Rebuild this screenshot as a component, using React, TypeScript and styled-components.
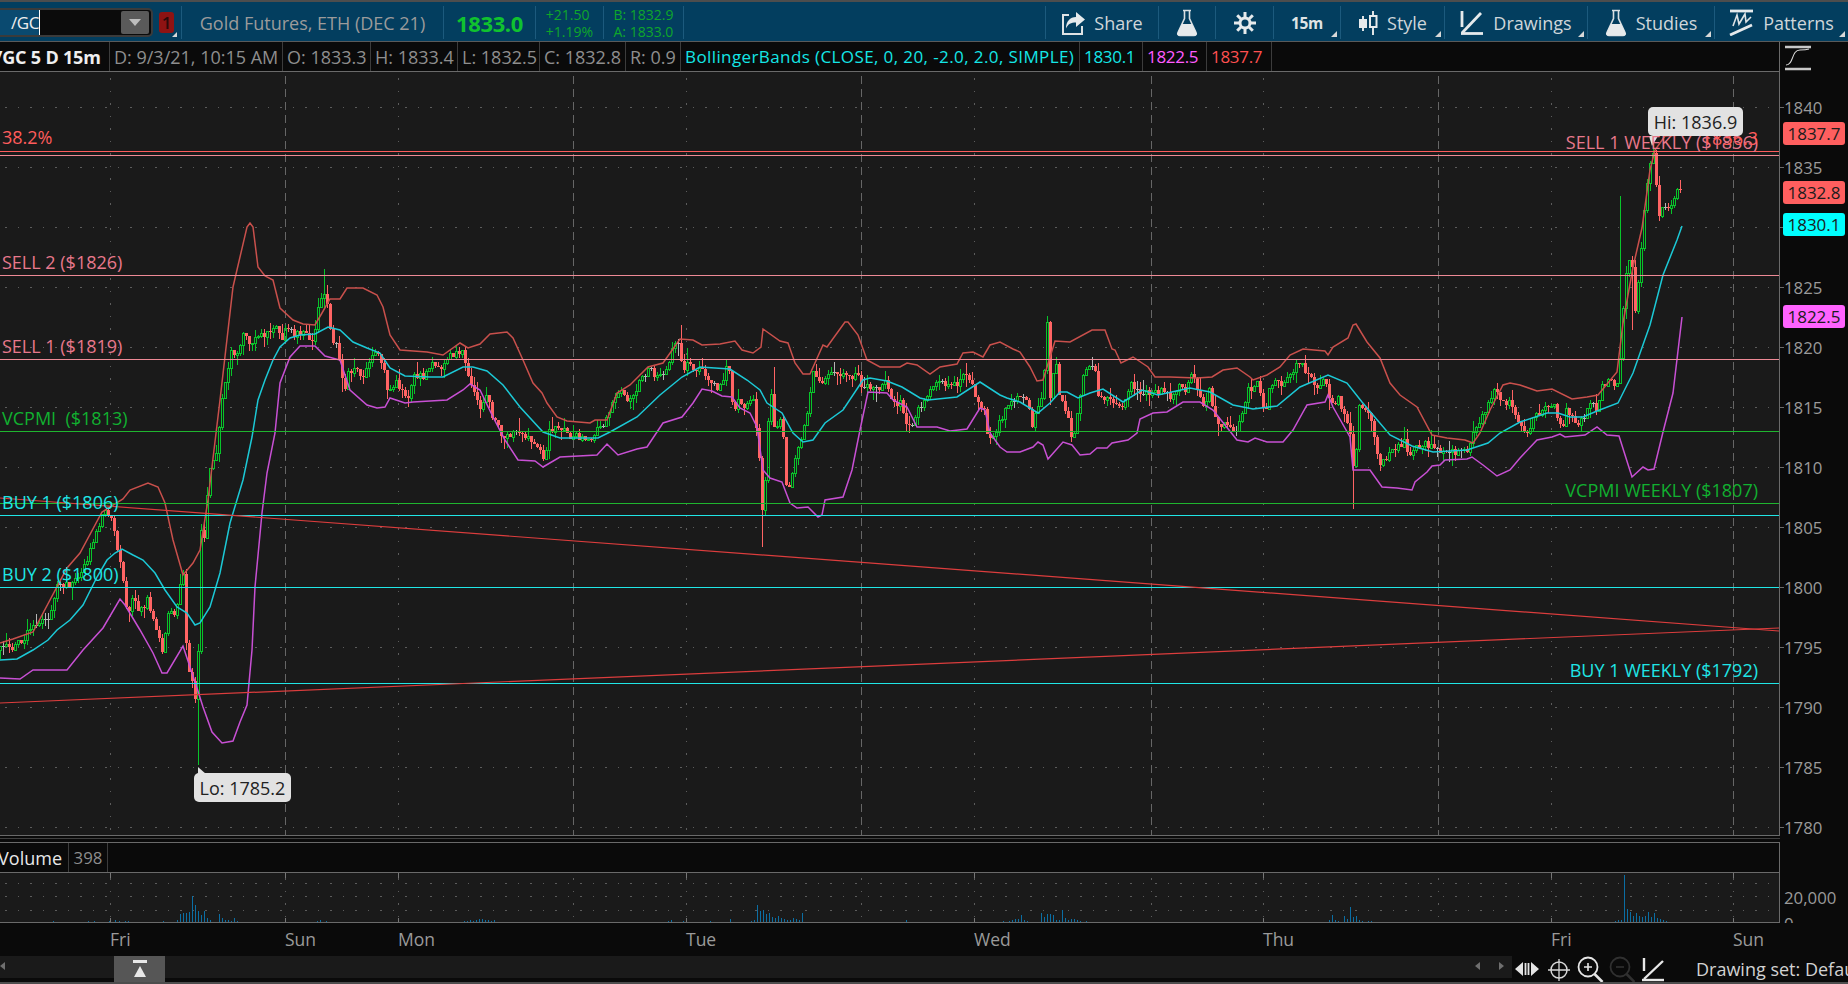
import React from "react";
import styled, { createGlobalStyle } from "styled-components";

const Global = createGlobalStyle`
  html, body { margin: 0; padding: 0; background: #0a0a0a; overflow: hidden; }
  #root { width: 1848px; height: 984px; }
  * { box-sizing: border-box; }
`;

/* ---------- chart data (page coordinates) ---------- */
type P = [number, number];
const upper: P[] = [[0,643],[13,639],[33,632],[67,568],[80,553],[102,512],[123,499],[130,490],[148,483],[158,487],[165,503],[173,540],[183,575],[193,563],[200,550],[208,500],[220,400],[233,287],[247,227],[250,223],[253,227],[258,267],[265,276],[273,280],[280,308],[293,320],[303,324],[315,325],[322,313],[330,299],[340,299],[347,288],[363,288],[377,295],[383,307],[390,335],[400,350],[427,352],[443,355],[460,343],[468,348],[480,344],[490,334],[507,332],[513,338],[523,360],[533,383],[542,393],[547,403],[557,417],[567,421],[590,423],[595,420],[607,420],[617,393],[630,385],[648,367],[663,363],[680,339],[693,340],[702,345],[720,344],[735,341],[742,350],[753,353],[761,347],[763,329],[780,341],[788,343],[795,363],[803,374],[810,374],[823,345],[827,347],[845,322],[848,322],[858,335],[867,360],[880,367],[900,367],[907,363],[917,365],[930,374],[940,367],[957,364],[963,353],[973,352],[983,357],[990,345],[1000,342],[1013,349],[1020,352],[1030,367],[1037,381],[1043,380],[1055,341],[1070,342],[1092,330],[1105,330],[1112,349],[1115,350],[1121,363],[1133,357],[1148,367],[1155,377],[1170,377],[1197,378],[1212,377],[1223,370],[1237,368],[1250,377],[1253,380],[1267,375],[1280,367],[1290,355],[1303,349],[1325,351],[1328,355],[1333,347],[1348,338],[1353,325],[1356,324],[1367,342],[1380,358],[1390,383],[1400,395],[1417,407],[1432,435],[1447,438],[1465,440],[1473,443],[1480,433],[1490,410],[1503,385],[1510,383],[1520,385],[1537,391],[1552,389],[1572,399],[1587,397],[1598,395],[1617,372],[1623,323],[1633,267],[1642,228],[1650,170],[1655,150],[1665,136],[1682,135]];
const middle: P[] = [[0,660],[17,659],[33,650],[48,640],[57,630],[70,620],[83,605],[97,577],[107,560],[115,553],[122,549],[133,555],[143,560],[155,573],[165,590],[177,607],[187,613],[195,625],[200,623],[210,607],[220,573],[230,523],[243,480],[252,437],[258,400],[265,380],[273,360],[280,347],[290,338],[300,335],[315,334],[328,327],[340,330],[353,342],[367,348],[380,353],[390,368],[405,376],[430,377],[443,377],[463,367],[473,367],[487,371],[503,385],[520,407],[543,432],[560,438],[598,438],[610,432],[637,417],[660,395],[682,377],[700,367],[730,369],[747,380],[760,390],[767,403],[782,413],[793,433],[803,442],[813,440],[825,423],[843,410],[863,380],[870,378],[887,381],[902,387],[920,398],[928,400],[957,397],[980,382],[1000,395],[1007,398],[1020,402],[1038,413],[1050,403],[1060,392],[1067,392],[1078,398],[1090,393],[1103,389],[1123,402],[1142,390],[1158,395],[1190,388],[1210,392],[1233,405],[1253,409],[1277,406],[1300,387],[1328,375],[1347,383],[1362,402],[1390,435],[1412,446],[1433,452],[1467,450],[1488,443],[1500,433],[1520,422],[1547,413],[1558,413],[1570,417],[1583,417],[1597,411],[1618,403],[1633,373],[1650,325],[1663,275],[1677,240],[1682,226]];
const lower: P[] = [[0,678],[20,679],[33,670],[57,670],[67,670],[83,650],[103,628],[120,599],[125,605],[140,630],[153,653],[162,673],[167,673],[183,646],[190,667],[197,688],[203,707],[212,732],[222,743],[233,741],[240,722],[247,705],[252,650],[255,587],[262,513],[267,473],[275,433],[280,383],[290,357],[300,346],[315,346],[325,356],[340,360],[350,390],[367,405],[377,408],[385,407],[390,398],[405,403],[413,402],[447,400],[463,390],[470,384],[480,390],[493,417],[505,440],[518,460],[535,461],[543,467],[560,457],[597,455],[607,444],[618,455],[637,449],[647,447],[663,423],[682,417],[693,403],[702,389],[712,391],[722,396],[732,397],[740,408],[750,413],[757,427],[763,470],[770,478],[782,482],[790,503],[797,508],[808,507],[818,517],[822,515],[825,500],[843,497],[852,470],[860,430],[868,392],[887,393],[893,400],[907,407],[917,427],[937,427],[950,431],[967,429],[980,408],[985,410],[990,433],[1000,447],[1007,452],[1020,452],[1033,447],[1038,442],[1043,445],[1048,459],[1063,442],[1072,445],[1080,455],[1090,454],[1097,448],[1107,448],[1112,443],[1128,440],[1137,433],[1140,419],[1153,413],[1167,412],[1183,402],[1200,402],[1213,410],[1237,440],[1248,442],[1255,438],[1267,442],[1283,442],[1293,430],[1307,405],[1325,402],[1328,395],[1333,407],[1350,437],[1353,470],[1370,470],[1382,487],[1397,488],[1412,490],[1415,482],[1427,472],[1432,466],[1440,465],[1445,460],[1467,459],[1472,457],[1483,465],[1497,476],[1510,470],[1520,458],[1537,440],[1552,437],[1560,434],[1565,437],[1585,435],[1597,427],[1607,435],[1619,436],[1632,477],[1643,467],[1648,470],[1654,469],[1663,432],[1673,393],[1682,317]];
const closes: P[] = [[0,650],[15,645],[33,627],[47,620],[57,587],[73,583],[87,560],[97,530],[103,510],[110,517],[115,537],[123,580],[127,613],[133,597],[140,612],[147,600],[153,620],[162,650],[170,602],[173,620],[180,587],[183,577],[187,665],[192,680],[195,703],[198,653],[200,528],[205,537],[208,473],[217,450],[222,400],[230,353],[238,350],[245,328],[248,347],[257,337],[267,333],[273,327],[283,337],[287,323],[293,333],[307,335],[312,343],[320,300],[323,287],[328,310],[332,340],[337,340],[342,380],[347,390],[348,373],[357,370],[363,377],[370,357],[377,350],[385,373],[388,395],[395,380],[403,390],[408,400],[412,377],[422,377],[433,362],[440,373],[447,355],[457,353],[462,350],[467,373],[473,390],[482,410],[487,387],[492,420],[495,422],[505,440],[513,433],[523,433],[537,443],[545,462],[548,430],[560,428],[570,437],[580,437],[592,438],[597,430],[605,420],[610,407],[615,395],[623,393],[628,403],[635,395],[640,380],[650,368],[653,380],[662,377],[667,363],[677,340],[682,365],[685,377],[688,360],[693,370],[702,367],[707,377],[717,388],[725,373],[728,358],[733,413],[738,397],[745,407],[753,398],[758,447],[763,523],[767,437],[770,387],[775,433],[782,417],[785,478],[788,488],[793,468],[800,443],[808,410],[813,367],[820,382],[828,377],[838,373],[850,377],[857,372],[860,390],[868,385],[877,388],[885,382],[892,400],[900,403],[907,430],[913,420],[920,407],[932,385],[942,383],[950,388],[957,383],[962,373],[970,377],[977,403],[985,407],[988,445],[997,427],[1003,413],[1010,403],[1020,397],[1027,397],[1032,423],[1040,403],[1043,383],[1047,323],[1050,402],[1055,357],[1060,400],[1067,415],[1073,443],[1078,403],[1083,377],[1090,363],[1095,373],[1098,398],[1107,397],[1120,410],[1125,400],[1130,380],[1137,390],[1147,392],[1160,390],[1173,397],[1178,382],[1185,388],[1192,373],[1197,393],[1203,403],[1210,388],[1213,412],[1220,425],[1227,423],[1237,433],[1240,418],[1248,390],[1257,385],[1265,413],[1270,383],[1283,383],[1293,370],[1300,358],[1305,370],[1317,388],[1325,375],[1330,407],[1337,397],[1343,413],[1352,440],[1354,495],[1358,405],[1367,410],[1373,433],[1380,467],[1390,452],[1397,447],[1405,440],[1408,458],[1415,447],[1422,443],[1430,445],[1447,452],[1467,452],[1470,440],[1480,422],[1490,398],[1495,391],[1500,403],[1508,402],[1515,415],[1518,425],[1527,437],[1533,418],[1542,410],[1553,403],[1562,428],[1565,410],[1573,420],[1578,425],[1583,417],[1588,403],[1597,408],[1602,383],[1610,383],[1618,387],[1622,325],[1627,260],[1633,267],[1635,315],[1640,258],[1645,193],[1652,150],[1655,172],[1658,217],[1663,203],[1670,207],[1675,195],[1678,187],[1682,193]];

const longWicks: P[] = [[198,765],[1047,316],[763,547],[682,325],[323,269],[775,367],[1352,509],[1652,144],[1621,196],[1633,330],[231,376]];

const poly = (pts: P[]) => pts.map(([x, y]) => `${x},${y}`).join(" ");

const buildCandles = () => {
  let seed = 12345;
  const rnd = () => {
    seed = (seed * 1664525 + 1013904223) % 4294967296;
    return seed / 4294967296;
  };
  const at = (x: number) => {
    for (let k = 1; k < closes.length; k++) {
      if (x <= closes[k][0]) {
        const [x0, y0] = closes[k - 1];
        const [x1, y1] = closes[k];
        return y0 + ((y1 - y0) * (x - x0)) / (x1 - x0 || 1);
      }
    }
    return closes[closes.length - 1][1];
  };
  let green = "";
  let redBody = "";
  let redWick = "";
  let gray = "";
  let prev = at(0);
  for (let i = 0; i <= 560; i++) {
    const x = i * 3;
    const c = Math.round(at(x) + (rnd() - 0.5) * 8);
    const o = Math.round(prev);
    const top = Math.min(o, c);
    const bot = Math.max(o, c);
    let hi = top - Math.round(rnd() * rnd() * 15);
    let lo = bot + Math.round(rnd() * rnd() * 15);
    for (const [wx, wy] of longWicks) {
      if (Math.abs(wx - x) <= 1) {
        if (wy < top) hi = wy;
        else if (wy > bot) lo = wy;
      }
    }
    const h = bot - top;
    if (h < 1) {
      gray += `M${x + 0.5} ${hi - 1}V${lo + 2}M${x - 1} ${top + 0.5}h3`;
    } else if (c < o) {
      green += `M${x + 0.5} ${hi}V${top}M${x + 0.5} ${bot}V${lo}M${x - 0.5} ${top + 0.5}h2v${h}h-2z`;
    } else {
      redBody += `M${x - 1} ${top}h3v${h}h-3z`;
      redWick += `M${x + 0.5} ${hi}V${lo}`;
    }
    prev = c;
  }
  return { green, redBody, redWick, gray };
};
const candles = buildCandles();

const gridPrices = Array.from({ length: 13 }, (_, i) => 1840 - i * 5);
const yOf = (p: number) => 107 + (1840 - p) * 12;

const levels: { y: number; color: string }[] = [
  { y: 151, color: "#ff5c5c" },
  { y: 155, color: "#f08a94" },
  { y: 275, color: "#ee8a96" },
  { y: 359, color: "#ee8a96" },
  { y: 431, color: "#1fb52f" },
  { y: 503, color: "#1fb52f" },
  { y: 515, color: "#20e6e6" },
  { y: 587, color: "#20e6e6" },
  { y: 683, color: "#20e6e6" },
];
const dottedX = [110, 398, 686, 974, 1263, 1551];
const dashedX = [285, 573, 861, 1151, 1438, 1733];

const clusters: [number, number[]][] = [
  [38, [1]], [53, [2, 0, 1]], [88, [2, 0, 2]], [103, [1, 1, 2, 1, 3]], [116, [1, 2, 1, 2]], [128, [2, 1, 1]],
  [160, [1, 2, 1, 1, 1, 1]], [177, [3, 9, 10, 10, 11, 27, 18, 12, 8, 12, 5, 3]], [219, [9, 5, 3, 3, 2, 5, 2, 1, 1]], [270, [1]],
  [314, [1, 2, 3, 1, 2]], [338, [1, 1]], [378, [1]], [387, [1, 1]], [406, [1, 1]], [436, [1]],
  [461, [1, 2, 2, 3, 2, 3, 4, 4, 3, 3, 2, 3, 1, 1]], [526, [1]], [543, [1]], [610, [1]], [668, [2, 3, 1, 1, 1, 2]],
  [704, [1, 1, 2, 1]], [727, [1, 4]], [748, [1, 2, 3, 18, 12, 13, 9, 10, 6, 5, 7, 5, 4, 3, 3, 5, 4, 3, 10]],
  [900, [1]], [906, [3]], [910, [1]], [965, [1, 1]], [1000, [1, 2, 1, 2, 1, 1, 4, 8, 3, 2]], [1012, [3, 4]],
  [1041, [10, 6, 9, 9, 8, 3, 3, 13, 5, 3, 4, 4, 3, 2, 1, 2, 1, 1, 0, 1, 1]], [1280, [1]], [1287, [1]], [1293, [1]],
  [1329, [3, 8, 3, 2, 1, 7, 4, 16, 6, 7, 3, 2, 1, 2, 2, 1, 1, 1]], [1392, [1]], [1401, [1]], [1476, [1]], [1486, [1]],
  [1603, [1, 1, 1, 1, 2, 3, 3, 48, 14, 11, 7, 10, 7, 6, 7, 11, 6, 10, 5, 4, 3, 2, 1, 1]],
];
const volumePath = clusters
  .map(([x0, hs]) => hs.map((h, i) => (h ? `M${x0 + i * 3 + 0.5} 923v-${h}` : "")).join(""))
  .join("");

/* ---------- page ---------- */
const Page = styled.div`
  width: 1848px;
  height: 984px;
  display: flex;
  flex-direction: column;
  background: #0a0a0a;
  font-family: "Open Sans", "DejaVu Sans", sans-serif;
  overflow: hidden;
`;
const TopStrip = styled.div`
  height: 2px;
  background: #4d4d4d;
  flex: none;
`;
const Toolbar = styled.div`
  height: 40px;
  flex: none;
  display: flex;
  align-items: stretch;
  background: #033e5f;
  border-bottom: 1px solid #5a5a5a;
`;
const ToolSection = styled.div<{ $w: number; $sep?: boolean }>`
  position: relative;
  flex: none;
  width: ${(p) => p.$w}px;
  display: flex;
  align-items: center;
  justify-content: center;
  gap: 9px;
  margin: 4px 0 2px;
  border-left: ${(p) => (p.$sep === false ? "none" : "1px solid #1c5a7d")};
  color: #cfd6da;
  font-size: 18px;
`;
const Spacer = styled.div<{ $w: number }>`
  flex: none;
  width: ${(p) => p.$w}px;
`;
const Corner = styled.span`
  position: absolute;
  right: 3px;
  bottom: 2px;
  width: 0;
  height: 0;
  border-left: 6px solid transparent;
  border-bottom: 6px solid #d8d8d8;
`;
const SearchSection = styled.div`
  flex: none;
  width: 181px;
  display: flex;
  align-items: center;
  padding-top: 1px;
  position: relative;
`;
const SearchBox = styled.div`
  width: 153px;
  height: 29px;
  display: flex;
  align-items: stretch;
  padding: 0 2px 0 0;
  background: #0b0b0b;
  border: 2px solid #3b3b3b;
  border-left: none;
  border-radius: 0 5px 5px 0;
`;
const SearchText = styled.span`
  width: 40px;
  display: flex;
  align-items: center;
  justify-content: flex-end;
  background: #0a4a70;
  border-right: 1px solid #fff;
  color: #eee;
  font-size: 17px;
  letter-spacing: -0.4px;
  white-space: nowrap;
`;
const DropButton = styled.span`
  margin: 1px 0 1px auto;
  width: 28px;
  display: flex;
  align-items: center;
  justify-content: center;
  background: #5a5a5a;
  border-radius: 2px;
  &::after {
    content: "";
    border-left: 6px solid transparent;
    border-right: 6px solid transparent;
    border-top: 7px solid #bdbdbd;
  }
`;
const AlertBadge = styled.span`
  width: 15px;
  height: 21px;
  margin-left: 6px;
  display: flex;
  align-items: center;
  justify-content: center;
  background: #8e1313;
  border-radius: 3px;
  color: #2a0a0a;
  font-size: 17px;
  font-weight: 600;
`;
const CornerBadge = styled(Corner)`
  right: 4px;
  bottom: 4px;
  border-left-width: 5px;
  border-bottom-width: 5px;
`;
const TitleText = styled.span`
  color: #9b9b9b;
  font-size: 18px;
  white-space: nowrap;
`;
const LastPrice = styled.span`
  color: #10c22f;
  font-size: 22px;
  font-weight: 700;
  letter-spacing: -0.4px;
`;
const StackedText = styled.div`
  display: flex;
  flex-direction: column;
  color: #0fa62b;
  font-size: 14px;
  line-height: 17px;
  white-space: nowrap;
`;
const ButtonLabel = styled.span`
  white-space: nowrap;
`;
const IntervalLabel = styled.span`
  color: #dfe3e5;
  font-size: 15.5px;
  font-weight: 700;
  letter-spacing: -0.3px;
`;

const InfoRow = styled.div`
  height: 30px;
  flex: none;
  display: flex;
`;
const InfoBar = styled.div`
  flex: none;
  width: 1780px;
  display: flex;
  align-items: stretch;
  border-bottom: 1px solid #6a6a6a;
  border-right: 1px solid #6a6a6a;
  overflow: hidden;
`;
const InfoCell = styled.div<{ $w: number; $color?: string; $size?: number; $track?: number }>`
  flex: none;
  width: ${(p) => p.$w}px;
  display: flex;
  align-items: center;
  padding-left: 4px;
  border-right: 1px solid #3c3c3c;
  color: ${(p) => p.$color || "#8e8e8e"};
  font-size: ${(p) => p.$size ?? 18}px;
  letter-spacing: ${(p) => p.$track ?? 0}px;
  white-space: nowrap;
`;
const SymbolCell = styled(InfoCell)`
  padding-left: 0;
  color: #efefef;
  font-weight: 700;
  font-size: 18px;
  letter-spacing: -0.2px;
  overflow: hidden;
  & > span {
    margin-left: -5px;
  }
`;
const ScaleIconCell = styled.div`
  flex: 1;
  display: flex;
  padding: 3px 0 0 5px;
`;

const ChartRow = styled.div`
  height: 764px;
  flex: none;
  display: flex;
`;
const ChartPane = styled.div`
  position: relative;
  flex: none;
  width: 1780px;
  background: #1a1a1a;
  border-bottom: 1px solid #6a6a6a;
  border-right: 1px solid #6a6a6a;
  overflow: hidden;
`;
const ChartSvg = styled.svg`
  display: block;
  width: 1779px;
  height: 764px;
`;
const LevelLabel = styled.span<{ $x?: number; $r?: number; $y: number; $color: string }>`
  position: absolute;
  ${(p) => (p.$r !== undefined ? `right: ${p.$r}px;` : `left: ${p.$x}px;`)}
  top: ${(p) => p.$y - 72}px;
  transform: translateY(-50%);
  color: ${(p) => p.$color};
  font-size: 18px;
  white-space: pre;
`;
const Bubble = styled.div<{ $x: number; $y: number; $w: number }>`
  position: absolute;
  left: ${(p) => p.$x}px;
  top: ${(p) => p.$y - 72}px;
  width: ${(p) => p.$w}px;
  height: 29px;
  display: flex;
  align-items: center;
  justify-content: center;
  background: #e2e2e2;
  border-radius: 5px;
  color: #222;
  font-size: 18px;
  white-space: nowrap;
`;
const PriceScale = styled.div`
  position: relative;
  flex: 1;
  overflow: hidden;
`;
const PriceTick = styled.span<{ $y: number }>`
  position: absolute;
  left: 0;
  top: ${(p) => p.$y - 72}px;
  width: 4px;
  height: 1px;
  background: #6a6a6a;
`;
const PriceText = styled.span<{ $y: number }>`
  position: absolute;
  left: 4px;
  top: ${(p) => p.$y - 72}px;
  transform: translateY(-50%);
  color: #9a9a9a;
  font-size: 16.8px;
`;
const PriceTag = styled.span<{ $y: number; $bg: string }>`
  position: absolute;
  left: 3px;
  top: ${(p) => p.$y - 72}px;
  width: 62px;
  height: 23px;
  display: flex;
  align-items: center;
  justify-content: center;
  background: ${(p) => p.$bg};
  border-radius: 3px;
  color: #1c1c1c;
  font-size: 17px;
`;
const Splitter = styled.div`
  height: 7px;
  flex: none;
  width: 1780px;
  background: #0a0a0a;
  border-bottom: 1px solid #6a6a6a;
  padding-top: 2px;
  &::before {
    content: "";
    display: block;
    height: 1px;
    background: #3f3f3f;
  }
`;
const VolumeHeader = styled.div`
  height: 30px;
  flex: none;
  width: 1780px;
  display: flex;
  align-items: stretch;
  border-right: 1px solid #6a6a6a;
  border-bottom: 1px solid #6a6a6a;
`;
const VolumeTitle = styled.div`
  width: 69px;
  display: flex;
  align-items: center;
  justify-content: flex-end;
  padding-right: 6px;
  border-right: 1px solid #3c3c3c;
  color: #e8e8e8;
  font-size: 18px;
  overflow: hidden;
`;
const VolumeValue = styled.div`
  width: 39px;
  display: flex;
  align-items: center;
  justify-content: center;
  border-right: 1px solid #3c3c3c;
  color: #8e8e8e;
  font-size: 16.8px;
`;
const VolumeRow = styled.div`
  height: 50px;
  flex: none;
  display: flex;
`;
const VolumePane = styled.div`
  flex: none;
  width: 1780px;
  background: #1a1a1a;
  border-right: 1px solid #6a6a6a;
  border-bottom: 1px solid #6a6a6a;
`;
const VolumeSvg = styled.svg`
  display: block;
  width: 1779px;
  height: 49px;
`;
const VolumeScale = styled.div`
  flex: 1;
  position: relative;
  overflow: hidden;
  color: #9a9a9a;
  font-size: 16.8px;
`;
const VolumeScaleText = styled.span<{ $top: number }>`
  position: absolute;
  left: 4px;
  top: ${(p) => p.$top}px;
`;
const TimeAxis = styled.div`
  height: 33px;
  flex: none;
  position: relative;
`;
const TimeLabel = styled.span<{ $x: number }>`
  position: absolute;
  left: ${(p) => p.$x}px;
  top: 4px;
  color: #9a9a9a;
  font-size: 17.5px;
`;
const BottomBar = styled.div`
  height: 28px;
  flex: none;
  display: flex;
  align-items: flex-start;
  border-bottom: 2px solid #4d4d4d;
`;
const ScrollTrack = styled.div`
  position: relative;
  flex: none;
  width: 1512px;
  height: 22px;
  background: #1a1a1a;
`;
const ScrollThumb = styled.div`
  position: absolute;
  left: 114px;
  top: 0;
  width: 51px;
  height: 26px;
  display: flex;
  align-items: center;
  justify-content: center;
  background: #565656;
`;
const ArrowGlyph = styled.span<{ $dir: "l" | "r"; $x: number }>`
  position: absolute;
  left: ${(p) => p.$x}px;
  top: 6px;
  width: 0;
  height: 0;
  border-top: 4px solid transparent;
  border-bottom: 4px solid transparent;
  ${(p) => (p.$dir === "l" ? "border-right: 5px solid #6f6f6f;" : "border-left: 5px solid #6f6f6f;")}
`;
const BottomTools = styled.div`
  flex: 1;
  display: flex;
  align-items: center;
  height: 26px;
  padding-left: 3px;
  overflow: hidden;
  white-space: nowrap;
  color: #d2d2d2;
  font-size: 18px;
`;
const ToolIcon = styled.svg<{ $w: number; $m?: number }>`
  flex: none;
  width: ${(p) => p.$w}px;
  height: 26px;
  margin-right: ${(p) => p.$m ?? 9}px;
`;
const DrawingSet = styled.span`
  margin-left: 31px;
`;

/* ---------- icons ---------- */
const Flask = () => (
  <svg width="22" height="28" viewBox="0 0 22 28">
    <path d="M7 1.5h8M8.5 1.5v8L2 23.5c-.8 1.6.2 3 2 3h14c1.8 0 2.8-1.4 2-3L13.5 9.5v-8" fill="none" stroke="#d9dfe2" strokeWidth="1.6" />
    <path d="M6 15h10l4.6 9c.5 1.2-.3 2.5-1.8 2.5H3.2c-1.5 0-2.3-1.3-1.8-2.5z" fill="#e6eaec" />
  </svg>
);
const ShareIcon = () => (
  <svg width="24" height="26" viewBox="0 0 24 26">
    <path d="M8 5H2v19h19v-8" fill="none" stroke="#dfe3e5" strokeWidth="2" />
    <path d="M15 2l9 7.5-9 7.5v-4.5c-5 0-8 1.500-10 6 0-7 4-11.500 10-11.500z" fill="#e6eaec" />
  </svg>
);
const GearIcon = () => (
  <svg width="24" height="24" viewBox="0 0 24 24">
    <g stroke="#e6eaec" strokeWidth="3">
      <path d="M12 1v22M1 12h22M4.200 4.200l15.600 15.600M19.800 4.200L4.200 19.800" />
    </g>
    <circle cx="12" cy="12" r="6.500" fill="#e6eaec" />
    <circle cx="12" cy="12" r="3.500" fill="#033e5f" />
  </svg>
);
const StyleIcon = () => (
  <svg width="20" height="24" viewBox="0 0 20 24">
    <path d="M5 5v15M15 0v24" stroke="#dfe3e5" strokeWidth="2" />
    <rect x="1" y="8" width="8" height="9" fill="#e6eaec" />
    <rect x="12" y="5" width="6.500" height="11" fill="#033e5f" stroke="#e6eaec" strokeWidth="2" />
  </svg>
);
const DrawIcon = () => (
  <svg width="24" height="24" viewBox="0 0 24 24">
    <path d="M2 0v16" stroke="#e6eaec" strokeWidth="2.800" />
    <path d="M2 22L21 2" stroke="#e6eaec" strokeWidth="2.800" />
    <path d="M1 22.500h22" stroke="#e6eaec" strokeWidth="2.800" />
  </svg>
);
const PatternIcon = () => (
  <svg width="25" height="27" viewBox="0 0 25 27">
    <path d="M1 2h23" stroke="#e6eaec" strokeWidth="2.800" />
    <path d="M4 17L8 6l2 9 6-10 1 8 5-5" fill="none" stroke="#dfe3e5" strokeWidth="1.600" />
    <path d="M1 26L23 16" stroke="#e6eaec" strokeWidth="2.800" />
  </svg>
);

const leftLabels = [
  { x: 2, y: 137, c: "#ff5c5c", t: "38.2%" },
  { x: 2, y: 262, c: "#e8788c", t: "SELL 2 ($1826)" },
  { x: 2, y: 346, c: "#e8788c", t: "SELL 1 ($1819)" },
  { x: 2, y: 418, c: "#11b030", t: "VCPMI  ($1813)" },
  { x: 2, y: 502, c: "#1fe6e6", t: "BUY 1 ($1806)" },
  { x: 2, y: 574, c: "#1fe6e6", t: "BUY 2 ($1800)" },
];
const rightLabels = [
  { y: 142, c: "#e8788c", t: "SELL 1 WEEKLY ($1836)" },
  { y: 138, c: "#ff5c5c", t: "1836.3" },
  { y: 490, c: "#11b030", t: "VCPMI WEEKLY ($1807)" },
  { y: 670, c: "#1fe6e6", t: "BUY 1 WEEKLY ($1792)" },
];
const axis = [
  { x: 110, t: "Fri" },
  { x: 285, t: "Sun" },
  { x: 398, t: "Mon" },
  { x: 686, t: "Tue" },
  { x: 974, t: "Wed" },
  { x: 1263, t: "Thu" },
  { x: 1551, t: "Fri" },
  { x: 1733, t: "Sun" },
];
const infoCells = [
  { w: 173, t: "D: 9/3/21, 10:15 AM" },
  { w: 88, t: "O: 1833.3" },
  { w: 87, t: "H: 1833.4" },
  { w: 82, t: "L: 1832.5" },
  { w: 86, t: "C: 1832.8" },
  { w: 55, t: "R: 0.9" },
  { w: 399, t: "BollingerBands (CLOSE, 0, 20, -2.0, 2.0, SIMPLE)", c: "#14e6e6", s: 17, k: 0.4 },
  { w: 63, t: "1830.1", c: "#14e6e6", s: 17, k: -0.3 },
  { w: 64, t: "1822.5", c: "#ff5cff", s: 17, k: -0.3 },
  { w: 65, t: "1837.7", c: "#ff5050", s: 17, k: -0.3 },
];

export default function App() {
  return (
    <Page>
      <Global />
      <TopStrip />
      <Toolbar>
        <SearchSection>
          <SearchBox>
            <SearchText>/GC</SearchText>
            <DropButton />
          </SearchBox>
          <AlertBadge>1</AlertBadge>
          <CornerBadge />
        </SearchSection>
        <ToolSection $w={262}><TitleText>Gold Futures, ETH (DEC 21)</TitleText></ToolSection>
        <ToolSection $w={92}><LastPrice>1833.0</LastPrice></ToolSection>
        <ToolSection $w={68}><StackedText><span>+21.50</span><span>+1.19%</span></StackedText></ToolSection>
        <ToolSection $w={80}><StackedText><span>B: 1832.9</span><span>A: 1833.0</span></StackedText></ToolSection>
        <ToolSection $w={1} />
        <Spacer $w={361} />
        <ToolSection $w={113}><ShareIcon /><ButtonLabel>Share</ButtonLabel></ToolSection>
        <ToolSection $w={57}><Flask /></ToolSection>
        <ToolSection $w={58}><GearIcon /></ToolSection>
        <ToolSection $w={67}><IntervalLabel>15m</IntervalLabel><Corner /></ToolSection>
        <ToolSection $w={104}><StyleIcon /><ButtonLabel>Style</ButtonLabel><Corner /></ToolSection>
        <ToolSection $w={143}><DrawIcon /><ButtonLabel>Drawings</ButtonLabel><Corner /></ToolSection>
        <ToolSection $w={127}><Flask /><ButtonLabel>Studies</ButtonLabel><Corner /></ToolSection>
        <ToolSection $w={134}><PatternIcon /><ButtonLabel>Patterns</ButtonLabel><Corner /></ToolSection>
      </Toolbar>

      <InfoRow>
        <InfoBar>
          <SymbolCell $w={110}><span>/GC 5 D 15m</span></SymbolCell>
          {infoCells.map((c) => (
            <InfoCell key={c.t} $w={c.w} $color={c.c} $size={c.s} $track={c.k}>{c.t}</InfoCell>
          ))}
        </InfoBar>
        <ScaleIconCell>
          <svg width="26" height="26" viewBox="0 0 26 26">
            <path d="M0 2h26M0 24h26" stroke="#c8c8c8" strokeWidth="2.600" />
            <path d="M1 20c8 0 5-15 14-15 4 0 6 0 9-1" fill="none" stroke="#d8d8d8" strokeWidth="1.100" />
          </svg>
        </ScaleIconCell>
      </InfoRow>

      <ChartRow>
        <ChartPane>
          <ChartSvg viewBox="0 72 1779 764">
            <g stroke="#5c5c5c" strokeWidth="1" strokeDasharray="1.500 11" shapeRendering="crispEdges">
              {gridPrices.map((p) => (
                <line key={p} x1="5" x2="1775" y1={yOf(p) + 0.5} y2={yOf(p) + 0.5} />
              ))}
              {dottedX.map((x) => (
                <line key={x} x1={x + 0.5} x2={x + 0.5} y1="78" y2="836" />
              ))}
            </g>
            <g stroke="#666" strokeWidth="1" strokeDasharray="8 5" shapeRendering="crispEdges">
              {dashedX.map((x) => (
                <line key={x} x1={x + 0.5} x2={x + 0.5} y1="76" y2="836" />
              ))}
            </g>
            <g shapeRendering="crispEdges">
              <path d={candles.gray} stroke="#b5b5b5" fill="none" />
              <path d={candles.green} stroke="#08c42a" fill="none" />
              <path d={candles.redWick} stroke="#ff6464" fill="none" />
              <path d={candles.redBody} fill="#ff6464" />
            </g>
            <polyline points={poly(upper)} fill="none" stroke="#c9504c" strokeWidth="1.500" />
            <polyline points={poly(middle)} fill="none" stroke="#1cc9d6" strokeWidth="1.500" />
            <polyline points={poly(lower)} fill="none" stroke="#c850d4" strokeWidth="1.500" />
            <g shapeRendering="crispEdges">
              {levels.map((l) => (
                <line key={l.y} x1="0" x2="1779" y1={l.y + 0.5} y2={l.y + 0.5} stroke={l.color} />
              ))}
            </g>
            <line x1="0" y1="498" x2="1779" y2="631" stroke="#dc3d3d" strokeWidth="1.200" />
            <line x1="0" y1="703" x2="1779" y2="628" stroke="#dc3d3d" strokeWidth="1.200" />
            <path d="M1652 146l-3-10h9z" fill="#e2e2e2" />
            <path d="M198 767l8 7h-8z" fill="#e2e2e2" />
          </ChartSvg>
          {leftLabels.map((l) => (
            <LevelLabel key={l.t} $x={l.x} $y={l.y} $color={l.c}>{l.t}</LevelLabel>
          ))}
          {rightLabels.map((l) => (
            <LevelLabel key={l.t} $r={21} $y={l.y} $color={l.c}>{l.t}</LevelLabel>
          ))}
          <Bubble $x={1648} $y={107} $w={95}>Hi: 1836.9</Bubble>
          <Bubble $x={194} $y={773} $w={97}>Lo: 1785.2</Bubble>
        </ChartPane>
        <PriceScale>
          {gridPrices.map((p) => (
            <React.Fragment key={p}>
              <PriceTick $y={yOf(p)} />
              <PriceText $y={yOf(p)}>{p}</PriceText>
            </React.Fragment>
          ))}
          <PriceTag $y={122} $bg="#ff5f5f">1837.7</PriceTag>
          <PriceTag $y={181} $bg="#ff5f5f">1832.8</PriceTag>
          <PriceTag $y={213} $bg="#00ffff">1830.1</PriceTag>
          <PriceTag $y={305} $bg="#ff63ff">1822.5</PriceTag>
        </PriceScale>
      </ChartRow>

      <Splitter />
      <VolumeHeader>
        <VolumeTitle>Volume</VolumeTitle>
        <VolumeValue>398</VolumeValue>
      </VolumeHeader>
      <VolumeRow>
        <VolumePane>
          <VolumeSvg viewBox="0 873 1779 49">
            <g stroke="#5c5c5c" strokeDasharray="1.500 11" shapeRendering="crispEdges">
              <line x1="5" x2="1775" y1="883.500" y2="883.500" />
              <line x1="5" x2="1775" y1="896.500" y2="896.500" />
              <line x1="5" x2="1775" y1="910.500" y2="910.500" />
              {[...dottedX, ...dashedX].map((x) => (
                <line key={x} x1={x + 0.5} x2={x + 0.5} y1="878" y2="918" />
              ))}
            </g>
            <g stroke="#777" shapeRendering="crispEdges">
              {[110, 285, 398, 686, 974, 1263, 1551, 1733].map((x) => (
                <path key={x} d={`M${x + 0.5} 873v5M${x + 0.5} 918v5`} />
              ))}
            </g>
            <path d={volumePath} stroke="#0b6ea3" fill="none" shapeRendering="crispEdges" />
          </VolumeSvg>
        </VolumePane>
        <VolumeScale>
          <VolumeScaleText $top={13}>20,000</VolumeScaleText>
          <VolumeScaleText $top={39}>0</VolumeScaleText>
        </VolumeScale>
      </VolumeRow>
      <TimeAxis>
        {axis.map((a) => (
          <TimeLabel key={a.x} $x={a.x}>{a.t}</TimeLabel>
        ))}
      </TimeAxis>
      <BottomBar>
        <ScrollTrack>
          <ArrowGlyph $dir="l" $x={0} />
          <ScrollThumb>
            <svg width="14" height="18" viewBox="0 0 14 18">
              <rect x="0" y="0" width="14" height="3" fill="#e8e8e8" />
              <path d="M7 6l6 11H1z" fill="#e8e8e8" />
            </svg>
          </ScrollThumb>
          <ArrowGlyph $dir="l" $x={1475} />
          <ArrowGlyph $dir="r" $x={1499} />
        </ScrollTrack>
        <BottomTools>
          <ToolIcon $w={24} viewBox="0 0 24 26">
            <path d="M8 6v14L0 13zM16 6v14l8-7z" fill="#e4e4e4" />
            <path d="M10.500 7v12M13.500 7v12" stroke="#e4e4e4" strokeWidth="1.800" />
          </ToolIcon>
          <ToolIcon $w={22} $m={7} viewBox="0 0 22 26">
            <circle cx="11" cy="14" r="8" fill="none" stroke="#d8d8d8" strokeWidth="1.500" />
            <path d="M0 14h22M11 3v22" stroke="#d8d8d8" strokeWidth="1.300" />
          </ToolIcon>
          <ToolIcon $w={27} $m={5} viewBox="0 0 27 26">
            <circle cx="11" cy="11" r="9.500" fill="none" stroke="#e6e6e6" strokeWidth="1.800" />
            <path d="M17.500 18l8 8" stroke="#e6e6e6" strokeWidth="2.600" />
            <path d="M7 11h8M11 7v8" stroke="#e6e6e6" strokeWidth="1.600" />
          </ToolIcon>
          <ToolIcon $w={26} $m={7} viewBox="0 0 26 26">
            <circle cx="11" cy="11" r="9.500" fill="none" stroke="#303030" strokeWidth="1.800" />
            <path d="M17.500 18l8 8" stroke="#303030" strokeWidth="2.600" />
            <path d="M7 11h8" stroke="#303030" strokeWidth="1.600" />
          </ToolIcon>
          <ToolIcon $w={23} $m={0} viewBox="0 0 23 26">
            <path d="M2 2v13" stroke="#e8e8e8" strokeWidth="2.400" />
            <path d="M2 23L21 5" stroke="#e8e8e8" strokeWidth="2.400" />
            <path d="M0 24h22" stroke="#e8e8e8" strokeWidth="2.400" />
          </ToolIcon>
          <DrawingSet>Drawing set: Default</DrawingSet>
        </BottomTools>
      </BottomBar>
    </Page>
  );
}
